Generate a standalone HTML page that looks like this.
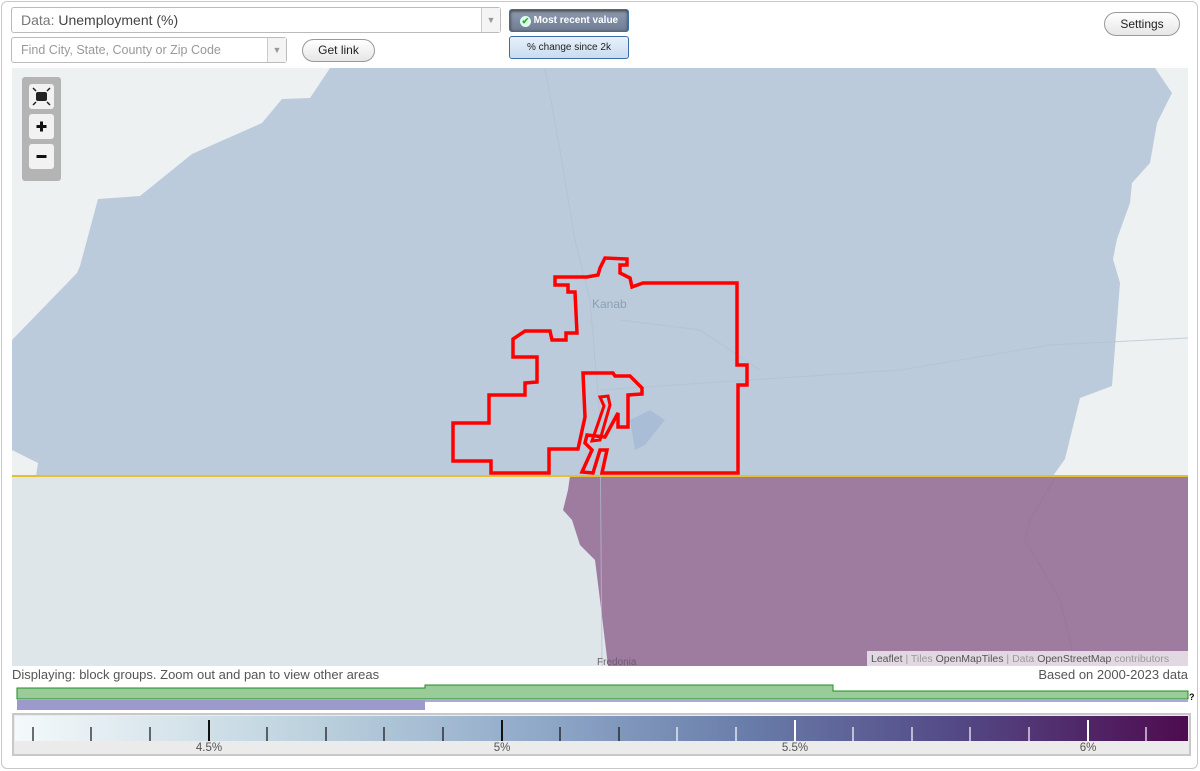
<!DOCTYPE html>
<html><head><meta charset="utf-8"><style>
*{box-sizing:border-box;margin:0;padding:0}
body{width:1200px;height:771px;background:#fff;font-family:"Liberation Sans",Arial,sans-serif;position:relative;overflow:hidden}
.frame{position:absolute;left:1px;top:1px;width:1197px;height:768px;border:1px solid #c8c8c8;border-radius:6px}
.sel{position:absolute;background:#fff;border:1px solid #bbb;border-radius:3px;color:#444}
.arr{position:absolute;right:0;top:0;bottom:0;width:19px;border-left:1px solid #ccc;background:#f4f4f4;color:#999;font-size:9px;text-align:center}
.btn{position:absolute;border:1px solid #999;border-radius:12px;background:linear-gradient(#fff,#e6e6e6);font-size:12px;text-align:center;color:#222}
.tb{position:absolute;border:1px solid #3a6ea5;border-radius:3px;font-size:10px;text-align:center}
.lbl{position:absolute;font-size:13px;color:#555}
</style></head><body>
<div class="frame"></div>
<div class="sel" style="left:11px;top:7px;width:490px;height:26px;font-size:14px;line-height:24px;padding-left:9px"><span style="color:#777">Data:</span> Unemployment (%)<div class="arr" style="line-height:24px">▼</div></div>
<div class="sel" style="left:11px;top:37px;width:276px;height:26px;font-size:12.5px;line-height:24px;padding-left:9px;color:#999">Find City, State, County or Zip Code<div class="arr" style="line-height:24px">▼</div></div>
<div class="btn" style="left:302px;top:39px;width:73px;height:23px;line-height:21px">Get link</div>
<div class="tb" style="left:509px;top:9px;width:120px;height:23px;line-height:21px;background:linear-gradient(#8e9ab0,#6f7d95);color:#fff;font-weight:bold;box-shadow:inset 0 1px 3px #333"><span style="display:inline-block;width:11px;height:11px;border-radius:6px;background:#dfe;color:#3a2;font-size:9px;line-height:11px;vertical-align:-1px">✔</span> Most recent value</div>
<div class="tb" style="left:509px;top:36px;width:120px;height:23px;line-height:21px;background:linear-gradient(#e8f1fb,#c9dcf0);color:#222">% change since 2k</div>
<div class="btn" style="left:1104px;top:12px;width:76px;height:24px;line-height:22px">Settings</div>

<svg style="position:absolute;left:12px;top:68px" width="1176" height="598" viewBox="12 68 1176 598">
<rect x="12" y="68" width="1176" height="598" fill="#eef1f2"/>
<polygon fill="#bccbdb" points="12,340 77,273 80,266 98,199 140,196 192,154 262,123 282,99 310,98 330,68 1155,68 1172,93 1157,123 1150,163 1132,183 1130,203 1117,239 1113,259 1120,283 1112,386 1080,398 1065,459 1053,476 36,476 38,463 12,450"/>
<rect x="12" y="476" width="1176" height="190" fill="#dfe6ea"/>
<polygon fill="#9e7c9f" points="570,476 1188,476 1188,666 608,666 600,600 595,560 580,545 572,520 563,510 568,490"/>
<polyline fill="none" stroke="#94799a" stroke-width="1" points="1055,478 1030,520 1025,540 1060,600 1070,640 1075,666"/>
<line x1="12" y1="476" x2="1188" y2="476" stroke="#e2c030" stroke-width="2"/>
<g fill="none" stroke="#b0c0cf" stroke-width="1" opacity="0.7">
<polyline points="600,390 750,380 900,370 1050,345 1188,338"/>
<polyline points="620,320 700,330 760,370"/>
<polyline points="545,68 560,150 575,240 590,300 600,420 602,666"/>
</g>
<path d="M630,420 L650,410 L665,420 L645,445 L635,450 Z" fill="#a9bed6"/>
<text x="592" y="308" font-size="12" fill="#8a9fb5" font-family="Liberation Sans">Kanab</text>
<text x="597" y="665" font-size="10" fill="#6e5a70" font-family="Liberation Sans">Fredonia</text>
<polygon fill="none" stroke="#f00" stroke-width="3.5" stroke-linejoin="miter" points="555,277 555,285 568,285 568,292 575,292 577,333 566,333 566,340 552,340 550,331 525,331 513,339 513,357 537,357 537,382 525,383 525,395 489,395 489,423 453,423 453,461 491,461 491,473 549,473 549,449 578,449 585,417 583,373 613,373 615,376 630,376 642,388 642,394 628,395 628,427 618,427 618,413 605,437 587,435 585,443 592,450 582,472 593,473 600,450 607,450 602,473 738,473 738,385 747,385 747,365 737,365 737,283 643,283 632,287 630,278 620,273 620,265 627,265 627,259 605,258 600,268 598,275 587,277"/>
<polygon fill="none" stroke="#f00" stroke-width="3" points="600,397 608,396 610,405 600,440 592,441 604,406"/>
<rect x="867" y="651" width="321" height="15" fill="rgba(255,255,255,0.7)"/>
<text x="871" y="662" font-size="10.5" fill="#999" font-family="Liberation Sans"><tspan fill="#555">Leaflet</tspan> | Tiles <tspan fill="#555">OpenMapTiles</tspan> | Data <tspan fill="#555">OpenStreetMap</tspan> contributors</text>
<rect x="22" y="77" width="39" height="104" rx="3" fill="#b4b4b4"/>
<rect x="29" y="84" width="25" height="25" rx="3" fill="#f2f2f2"/>
<rect x="36" y="92" width="11" height="9" rx="2" fill="#222"/>
<g stroke="#222" stroke-width="1.5"><path d="M33 88l3 3M50 88l-3 3M33 105l3-3M50 105l-3-3"/></g>
<rect x="29" y="114" width="25" height="25" rx="3" fill="#f2f2f2"/>
<path d="M36.5 126.5h10M41.5 121.5v10" stroke="#111" stroke-width="3"/>
<rect x="29" y="144" width="25" height="25" rx="3" fill="#f2f2f2"/>
<path d="M36.5 156.5h10" stroke="#111" stroke-width="3"/>
</svg>

<div class="lbl" style="left:12px;top:667px">Displaying: block groups. Zoom out and pan to view other areas</div>
<div class="lbl" style="right:12px;top:667px">Based on 2000-2023 data</div>
<svg style="position:absolute;left:0;top:680px" width="1200" height="34">
<path d="M17,19 V8 H425 V5 H833 V11 H1188 V19 Z" fill="#9c9" stroke="#282" stroke-width="1"/>
<rect x="17" y="20" width="408" height="10" fill="#9c99cc"/>
<rect x="425" y="20" width="763" height="2" fill="#aaa8dd"/>
<text x="1189" y="20" font-size="9" font-weight="bold" font-family="Liberation Sans">?</text>
</svg>
<div style="position:absolute;left:12px;top:713px;width:1179px;height:43px;border:2px solid #c8c8c8;background:#ebebeb">
<div style="position:absolute;left:1px;top:1px;right:1px;height:25px;background:linear-gradient(90deg,#f4f9fb,#bdd2de 25%,#8fa8c8 45%,#6a7eaa 62%,#534a86 80%,#4e0b4f)"></div>
<svg style="position:absolute;left:0;top:0" width="1175" height="40">
<g stroke="#111" stroke-width="1.2">
<line x1="19" y1="12" x2="19" y2="26"/><line x1="77" y1="12" x2="77" y2="26"/><line x1="136" y1="12" x2="136" y2="26"/>
<line x1="195" y1="5" x2="195" y2="26" stroke-width="2"/>
<line x1="253" y1="12" x2="253" y2="26"/><line x1="312" y1="12" x2="312" y2="26"/><line x1="370" y1="12" x2="370" y2="26"/><line x1="429" y1="12" x2="429" y2="26"/>
<line x1="488" y1="5" x2="488" y2="26" stroke-width="2"/>
<line x1="546" y1="12" x2="546" y2="26"/><line x1="605" y1="12" x2="605" y2="26"/></g>
<g stroke="#fff" stroke-width="1.2">
<line x1="663" y1="12" x2="663" y2="26"/><line x1="722" y1="12" x2="722" y2="26"/>
<line x1="781" y1="5" x2="781" y2="26" stroke-width="2"/>
<line x1="839" y1="12" x2="839" y2="26"/><line x1="898" y1="12" x2="898" y2="26"/><line x1="956" y1="12" x2="956" y2="26"/><line x1="1015" y1="12" x2="1015" y2="26"/>
<line x1="1074" y1="5" x2="1074" y2="26" stroke-width="2"/>
<line x1="1132" y1="12" x2="1132" y2="26"/></g>
<g font-size="11.5" fill="#555" font-family="Liberation Sans" text-anchor="middle">
<text x="195" y="36">4.5%</text><text x="488" y="36">5%</text><text x="781" y="36">5.5%</text><text x="1074" y="36">6%</text></g>
</svg></div>
</body></html>
